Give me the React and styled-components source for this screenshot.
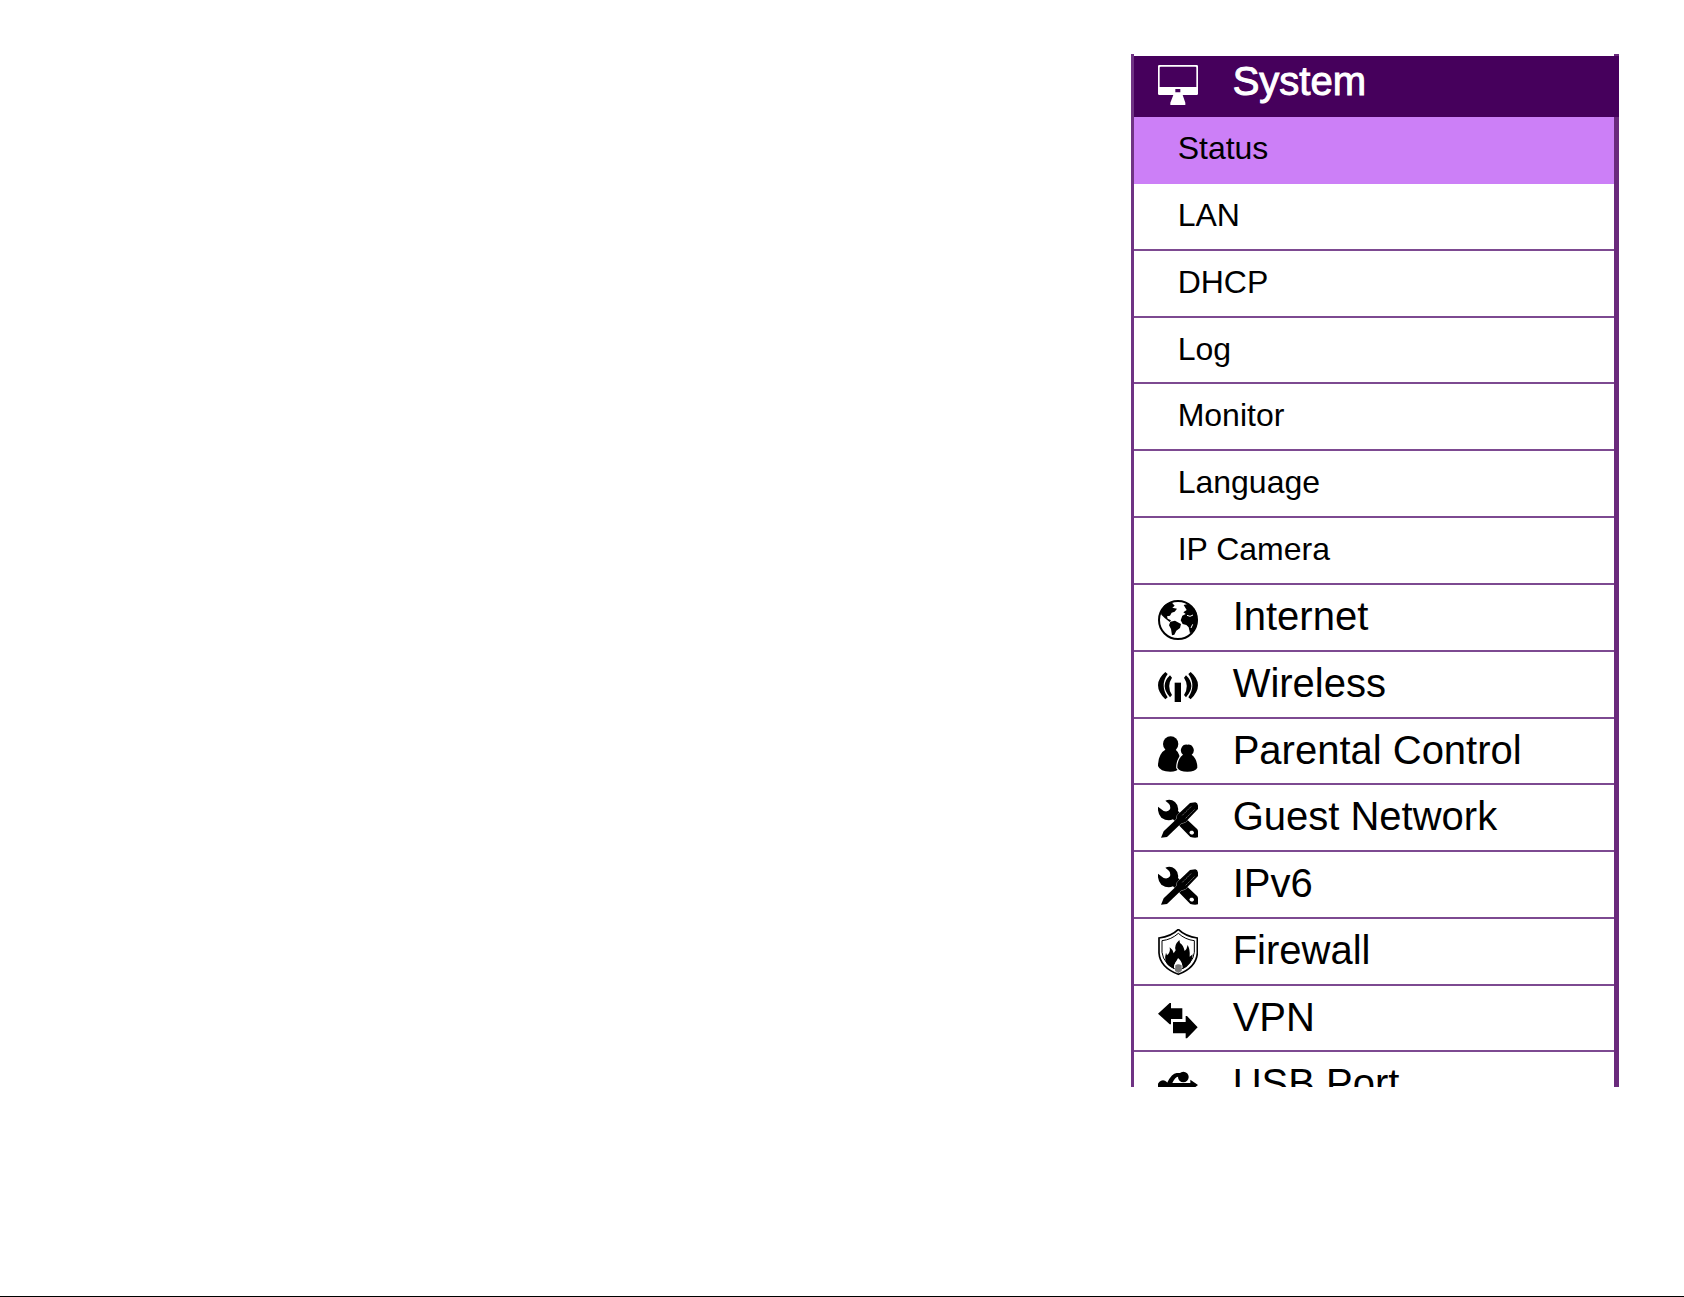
import React, { useState } from 'react';
import styled, { createGlobalStyle, css } from 'styled-components';

const GlobalStyle = createGlobalStyle`
  body {
    margin: 0;
    background: #fff;
    font-family: 'Liberation Sans', Arial, sans-serif;
  }
`;

const Page = styled.div`
  display: flex;
  box-sizing: border-box;
  height: 100vh;
  padding: 54px 65px 209px;
  justify-content: flex-end;
  border-bottom: 1px solid #000;
`;

// the right edge is painted as background so the open section can cover it
const Sidebar = styled.nav`
  box-sizing: border-box;
  width: 29vw;
  min-width: 360px;
  padding: 2px 5px 0 0;
  overflow: hidden;
  border-left: 3px solid #6f3384;
  background: linear-gradient(to left, #6a2a7c 5px, #fff 5px);
`;

const List = styled.ul`
  margin: 0;
  padding: 0;
  list-style: none;
`;

const rowHeight = css`
  height: 67px;

  li:nth-child(4n) > & {
    height: 66px;
  }
`;

const SectionLink = styled.a`
  display: flex;
  box-sizing: border-box;
  ${rowHeight}
  padding-left: 24px;
  gap: 35px;
  border-bottom: 2px solid #7d4a91;
  color: #000;
  font-size: 40px;
  line-height: 62px;
  text-decoration: none;
  white-space: nowrap;

  ${({ $open }) => $open && css`
    height: 61px;
    margin-right: -5px;
    border-bottom: 0;
    background: #46005c;
    color: #fff;
    line-height: 50px;
    -webkit-text-stroke: 1px #fff;
  `}
`;

const IconSvg = styled.svg`
  flex: none;
  width: 40px;
  height: 50px;
  margin-top: 10px;

  ${SectionLink}:has(+ ul) & {
    margin-top: 4px;
  }
`;

const SubLink = styled.a`
  display: block;
  box-sizing: border-box;
  ${rowHeight}
  padding-left: 44px;
  border-bottom: 2px solid ${({ $active }) => ($active ? '#cc7ff7' : '#7d4a91')};
  background: ${({ $active }) => ($active ? '#cc7ff7' : '#fff')};
  color: #000;
  font-size: 32px;
  line-height: 62px;
  text-decoration: none;
  white-space: nowrap;
`;

const Icon = ({ children }) => (
  <IconSvg viewBox="0 -15 120 150" fill="currentColor" aria-hidden="true">
    {children}
  </IconSvg>
);

const MonitorIcon = () => (
  <Icon>
    <path
      fillRule="evenodd"
      stroke="none"
      d="M4 0H116Q120 0 120 4V86Q120 90 116 90H74L82 113V120H37V113L46 90H4Q0 90 0 86V4Q0 0 4 0ZM8 5Q5 5 5 8V66H115V8Q115 5 112 5ZM52 72V82H67V72Z"
    />
  </Icon>
);

const GlobeIcon = () => (
  <Icon>
    <circle cx="60" cy="60" r="57" fill="none" stroke="currentColor" strokeWidth="6" />
    <path d="M8 33L20 15L40 6L50 17L43 23L57 26L50 35L41 38L36 47L27 49L29 56L39 61L35 66L20 54L10 44Z" />
    <path d="M37 65L51 62L69 72L66 84L55 92L49 104L42 106L39 87L33 76Z" />
    <path d="M77 15L92 11L109 26L117 42L116 52L119 60L116 78L106 92L96 100L92 82L85 75L74 72L68 61L73 47L83 42L76 37L86 30Z" />
    <path d="M87 46L96 49L105 45M104 73L99 84" fill="none" stroke="#fff" strokeWidth="3" />
  </Icon>
);

const WirelessIcon = () => (
  <Icon>
    <rect x="50" y="47" width="19" height="58" />
    <g fill="currentColor">
      <path d="M22 15Q-22 53 22 97L29 91Q5 55 29 21Z" />
      <path d="M98 15Q142 53 98 97L91 91Q115 55 91 21Z" />
      <path d="M36 25Q4 55 36 91L42 84Q25 57 42 32Z" />
      <path d="M84 25Q116 55 84 91L78 84Q95 57 78 32Z" />
    </g>
  </Icon>
);

const UsersIcon = () => (
  <Icon>
    <circle cx="38" cy="30" r="23" />
    <path d="M25 45H51Q67 59 67 84V102Q56 113 37 113Q6 113 0 96Q0 59 25 45Z" />
    <path
      d="M88 32A17 17 0 0 1 101 62Q118 75 118 101Q112 113 88 113Q64 113 58 101Q58 75 75 62A17 17 0 0 1 88 32Z"
      stroke="#fff"
      strokeWidth="7"
      paintOrder="stroke"
    />
  </Icon>
);

const ToolsIcon = () => (
  <Icon>
    <path
      fillRule="evenodd"
      d="M22 2Q38 -5 51 6Q63 17 60 33L118 88Q122 94 120 112Q111 115 97 111L45 58Q28 65 10 53Q-2 40 0 20L17 33Q30 37 36 28Q39 17 31 10ZM98 92Q91 97 97 102Q102 106 107 101Q110 96 104 92Z"
    />
    <path d="M112 7Q122 9 120 27L82 67L70 70L27 111L9 113L17 94L55 58L58 45L96 9Z" stroke="#fff" strokeWidth="2" paintOrder="stroke" />
    <path d="M73 46L101 18M83 55L110 28" stroke="#aaa" strokeWidth="2" strokeDasharray="5 3" />
  </Icon>
);

const FirewallIcon = () => (
  <Icon>
    <g transform="translate(0 -17)">
      <path
        d="M61 3Q40 24 3 29V74Q6 117 61 138Q115 117 118 74V29Q82 24 61 3Z"
        fill="none"
        stroke="currentColor"
        strokeWidth="5"
      />
      <path
        d="M61 15Q40 34 12 37V72Q16 108 61 127Q105 108 109 72V37Q82 34 61 15Z"
        fill="none"
        stroke="currentColor"
        strokeWidth="3"
      />
      <path d="M64 35Q47 51 53 66L47 75Q44 63 35 57Q38 72 27 81L24 73Q16 99 33 113L48 122Q47 105 57 99L60 89Q74 99 74 122Q103 110 104 78L95 85Q97 65 89 50Q87 62 80 68Q76 50 66 44Z" />
      <path d="M60 91Q48 105 48 119Q60 127 73 118Q74 103 60 91Z" fill="#fff" />
      <path d="M52 111Q60 104 71 111V128L61 134L51 128Z" fill="#777" />
    </g>
  </Icon>
);

const VpnIcon = () => (
  <Icon>
    <path d="M0 38L35 6H39V22H73V54H39V70H35Z" />
    <path d="M119 79L87 112H83V97H45V63H83V45H87Z" stroke="#fff" strokeWidth="7" paintOrder="stroke" />
  </Icon>
);

const UsbIcon = () => (
  <Icon>
    <circle cx="15" cy="56" r="16" />
    <circle cx="76" cy="30" r="16" />
    <path d="M15 48H27Q42 18 56 18H74V29H60Q51 30 43 48H97V38L120 54L97 72V62H15Z" />
    <path d="M46 58Q59 91 70 91H84M77 79H101V101H77Z" stroke="currentColor" strokeWidth="6" />
  </Icon>
);

const subItems = ['Status', 'LAN', 'DHCP', 'Log', 'Monitor', 'Language', 'IP Camera'];

const sections = [
  { label: 'System', icon: MonitorIcon, items: subItems },
  { label: 'Internet', icon: GlobeIcon },
  { label: 'Wireless', icon: WirelessIcon },
  { label: 'Parental Control', icon: UsersIcon },
  { label: 'Guest Network', icon: ToolsIcon },
  { label: 'IPv6', icon: ToolsIcon },
  { label: 'Firewall', icon: FirewallIcon },
  { label: 'VPN', icon: VpnIcon },
  { label: 'USB Port', icon: UsbIcon },
];

const App = () => {
  const [active, setActive] = useState('Status');

  return (
    <>
      <GlobalStyle />
      <Page>
        <Sidebar>
          <List>
            {sections.map(({ label, icon: SectionIcon, items }) => (
              <li key={label}>
                <SectionLink href="#" $open={Boolean(items)}>
                  <SectionIcon />
                  <span>{label}</span>
                </SectionLink>
                {items && (
                  <List>
                    {items.map((item) => (
                      <li key={item}>
                        <SubLink href="#" $active={item === active} onClick={() => setActive(item)}>
                          {item}
                        </SubLink>
                      </li>
                    ))}
                  </List>
                )}
              </li>
            ))}
          </List>
        </Sidebar>
      </Page>
    </>
  );
};

export default App;
